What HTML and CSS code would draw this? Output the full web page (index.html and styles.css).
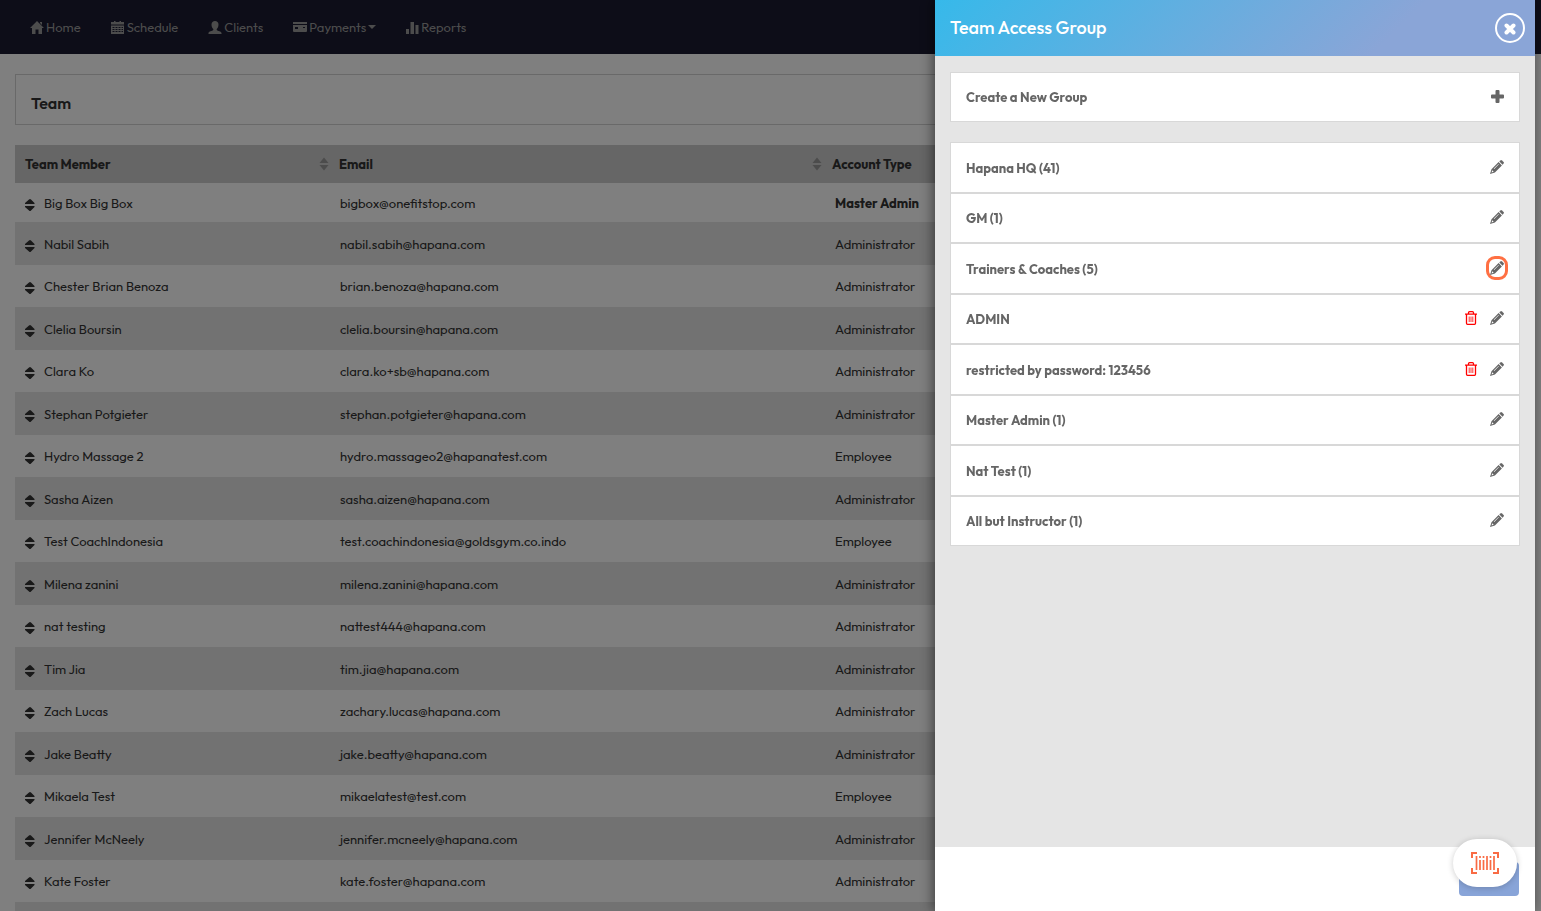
FILE: index.html
```
<!DOCTYPE html>
<html lang="en">
<head>
  <meta charset="utf-8">
  <meta name="viewport" content="width=device-width, initial-scale=1">
  <title>Team</title>
  <link rel="stylesheet" href="styles.css">
</head>

<body>
  <!-- shared icons -->
  <svg class="sprite" aria-hidden="true">
    <symbol id="i-sort" viewBox="0 0 10 14">
      <path d="M5 0.500L9.500 6H0.500zM0.500 8H9.500L5 13.500z"/>
    </symbol>
    <symbol id="i-drag" viewBox="0 0 10 14">
      <path d="M4 1.500Q5 .5 6 1.500L9.500 5V6H0V5zM0 8H9.500V9L6 12.500Q5 13.500 4 12.500L0 9z"/>
    </symbol>
    <symbol id="i-pencil" viewBox="0 0 14 14">
      <path d="M9.300 1.400L10.400 .4q.8-.7 1.600 0L13.600 2q.7.800 0 1.600L12.600 4.700z"/>
      <path fill-rule="evenodd" d="M8.600 2.100L11.900 5.400L4.900 12.500L0 14L1.500 9.200zM2.300 10.300L1.500 12.500L3.700 11.700zM8.500 3.900L3.800 8.600L4.200 9L8.900 4.300z"/>
    </symbol>
    <symbol id="i-trash" viewBox="0 0 12 14">
      <path fill="none" stroke="currentColor" stroke-width="1.300" d="M0 3.200H12M3.500 3V1.700Q3.500.7 4.500.7H7.500Q8.500.7 8.500 1.700V3M1.500 3.200V12.300Q1.500 13.300 2.500 13.300H9.500Q10.500 13.300 10.500 12.300V3.200"/>
      <path fill="none" stroke="currentColor" stroke-width=".8" d="M4.200 5.500V11M6 5.500V11M7.800 5.500V11"/>
    </symbol>
  </svg>

  <nav class="navbar">
    <a href="#"><svg width="14" height="13" viewBox="0 0 14 13"><path d="M7 0L14 7H12V13H8.500V8.500H5.500V13H2V7H0z"/><path d="M10 1H12V4L10 2z"/></svg>Home</a>
    <a href="#"><svg width="14" height="13" viewBox="0 0 14 13"><path fill-rule="evenodd" d="M0 1H3V0H4.500V1H8.500V0H10V1H13V3.500H0zM0 4.500H13V13H0zM1.500 6V7H3.500V6zM4.500 6V7H6.500V6zM7.500 6V7H9.500V6zM10.500 6V7H12V6zM1.500 8V9H3.500V8zM4.500 8V9H6.500V8zM7.500 8V9H9.500V8zM10.500 8V9H12V8zM1.500 10V11H3.500V10zM4.500 10V11H6.500V10zM7.500 10V11H9.500V10zM10.500 10V11H12V10z"/></svg>Schedule</a>
    <a href="#"><svg width="14" height="13" viewBox="0 0 14 13"><path d="M7 0C9 0 10.500 1.300 10.500 3.500C10.500 5.500 9.700 7 8.700 8V9C9.500 10 13.500 10.300 13.500 12V13H.5V12C.5 10.300 4.500 10 5.300 9V8C4.300 7 3.500 5.500 3.500 3.500C3.500 1.300 5 0 7 0z"/></svg>Clients</a>
    <a href="#"><svg width="14" height="13" viewBox="0 0 14 13"><path fill-rule="evenodd" d="M0 1H14V3H0zM0 4H14V10Q14 11 13 11H1Q0 11 0 10zM2 6V8H5V6zM10 6V7H12V6z"/></svg>Payments<span class="caret"></span></a>
    <a href="#"><svg width="13" height="13" viewBox="0 0 13 13"><path d="M0 8H3V13H0zM4.500 1H8V13H4.500zM9.500 4H12.500V13H9.500z"/></svg>Reports</a>
  </nav>

  <main>
    <h1 class="page-title">Team</h1>

    <table class="team">
      <colgroup>
        <col class="col-name">
        <col class="col-email">
        <col>
      </colgroup>
      <thead>
        <tr>
          <th><div>Team Member<svg class="sort"><use href="#i-sort"/></svg></div></th>
          <th><div>Email<svg class="sort"><use href="#i-sort"/></svg></div></th>
          <th>Account Type</th>
        </tr>
      </thead>
      <tbody>
        <tr><td><svg class="drag"><use href="#i-drag"/></svg>Big Box Big Box</td><td>bigbox@onefitstop.com</td><td><b>Master Admin</b></td></tr>
        <tr><td><svg class="drag"><use href="#i-drag"/></svg>Nabil Sabih</td><td>nabil.sabih@hapana.com</td><td>Administrator</td></tr>
        <tr><td><svg class="drag"><use href="#i-drag"/></svg>Chester Brian Benoza</td><td>brian.benoza@hapana.com</td><td>Administrator</td></tr>
        <tr><td><svg class="drag"><use href="#i-drag"/></svg>Clelia Boursin</td><td>clelia.boursin@hapana.com</td><td>Administrator</td></tr>
        <tr><td><svg class="drag"><use href="#i-drag"/></svg>Clara Ko</td><td>clara.ko+sb@hapana.com</td><td>Administrator</td></tr>
        <tr><td><svg class="drag"><use href="#i-drag"/></svg>Stephan Potgieter</td><td>stephan.potgieter@hapana.com</td><td>Administrator</td></tr>
        <tr><td><svg class="drag"><use href="#i-drag"/></svg>Hydro Massage 2</td><td>hydro.massageo2@hapanatest.com</td><td>Employee</td></tr>
        <tr><td><svg class="drag"><use href="#i-drag"/></svg>Sasha Aizen</td><td>sasha.aizen@hapana.com</td><td>Administrator</td></tr>
        <tr><td><svg class="drag"><use href="#i-drag"/></svg>Test CoachIndonesia</td><td>test.coachindonesia@goldsgym.co.indo</td><td>Employee</td></tr>
        <tr><td><svg class="drag"><use href="#i-drag"/></svg>Milena zanini</td><td>milena.zanini@hapana.com</td><td>Administrator</td></tr>
        <tr><td><svg class="drag"><use href="#i-drag"/></svg>nat testing</td><td>nattest444@hapana.com</td><td>Administrator</td></tr>
        <tr><td><svg class="drag"><use href="#i-drag"/></svg>Tim Jia</td><td>tim.jia@hapana.com</td><td>Administrator</td></tr>
        <tr><td><svg class="drag"><use href="#i-drag"/></svg>Zach Lucas</td><td>zachary.lucas@hapana.com</td><td>Administrator</td></tr>
        <tr><td><svg class="drag"><use href="#i-drag"/></svg>Jake Beatty</td><td>jake.beatty@hapana.com</td><td>Administrator</td></tr>
        <tr><td><svg class="drag"><use href="#i-drag"/></svg>Mikaela Test</td><td>mikaelatest@test.com</td><td>Employee</td></tr>
        <tr><td><svg class="drag"><use href="#i-drag"/></svg>Jennifer McNeely</td><td>jennifer.mcneely@hapana.com</td><td>Administrator</td></tr>
        <tr><td><svg class="drag"><use href="#i-drag"/></svg>Kate Foster</td><td>kate.foster@hapana.com</td><td>Administrator</td></tr>
        <tr><td></td><td></td><td></td></tr>
      </tbody>
    </table>
  </main>

  <div class="backdrop"></div>

  <aside class="drawer">
    <header class="drawer-header">
      <h2>Team Access Group</h2>
      <button class="close" aria-label="Close"><svg width="12" height="12" viewBox="0 0 12 12"><path fill="none" stroke="#fff" stroke-width="4" stroke-linecap="round" d="M2.500 2.500L9.500 9.500M9.500 2.500L2.500 9.500"/></svg></button>
    </header>

    <div class="drawer-body">
      <div class="group create">
        <span>Create a New Group</span>
        <button aria-label="Add group"><svg width="13" height="13" viewBox="0 0 13 13"><path d="M4.500 1q0-1 1-1h2q1 0 1 1v3.500H12q1 0 1 1v2q0 1-1 1H8.500V12q0 1-1 1h-2q-1 0-1-1V8.500H1q-1 0-1-1v-2q0-1 1-1h3.500z"/></svg></button>
      </div>

      <ul class="groups">
        <li class="group"><span>Hapana HQ (41)</span><button aria-label="Edit"><svg class="pencil"><use href="#i-pencil"/></svg></button></li>
        <li class="group"><span>GM (1)</span><button aria-label="Edit"><svg class="pencil"><use href="#i-pencil"/></svg></button></li>
        <li class="group"><span>Trainers &amp; Coaches (5)</span><button class="marked" aria-label="Edit"><svg class="pencil"><use href="#i-pencil"/></svg></button></li>
        <li class="group"><span>ADMIN</span><button class="delete" aria-label="Delete"><svg class="trash"><use href="#i-trash"/></svg></button><button aria-label="Edit"><svg class="pencil"><use href="#i-pencil"/></svg></button></li>
        <li class="group"><span>restricted by password: 123456</span><button class="delete" aria-label="Delete"><svg class="trash"><use href="#i-trash"/></svg></button><button aria-label="Edit"><svg class="pencil"><use href="#i-pencil"/></svg></button></li>
        <li class="group"><span>Master Admin (1)</span><button aria-label="Edit"><svg class="pencil"><use href="#i-pencil"/></svg></button></li>
        <li class="group"><span>Nat Test (1)</span><button aria-label="Edit"><svg class="pencil"><use href="#i-pencil"/></svg></button></li>
        <li class="group"><span>All but Instructor (1)</span><button aria-label="Edit"><svg class="pencil"><use href="#i-pencil"/></svg></button></li>
      </ul>
    </div>

    <footer class="drawer-footer">
      <button class="save" aria-label="Save"></button>
    </footer>
  </aside>

  <button class="scan" aria-label="Scan barcode">
    <svg width="28" height="22" viewBox="0 0 28 22">
      <path fill="none" stroke="#f96b44" stroke-width="2" d="M6 1H1V6M22 1H27V6M6 21H1V16M22 21H27V16"/>
      <path fill="none" stroke="#f96b44" stroke-width="1.700" d="M5.500 4V18M9 8V18M12.500 8V18M16 4V18M19.500 8V18M23 4V18M9 4V6M12.500 4V6M19.500 4V6"/>
    </svg>
  </button>
</body>

</html>
```
FILE: styles.css
```
* {
  box-sizing: border-box;
}

body {
  margin: 0;
  height: 100vh;
  overflow: hidden;
  background-color: #fff;
  color: #333;
  font-family: Outfit, Lato, sans-serif;
  font-size: 13px;
  line-height: 20px;
}

button {
  display: flex;
  align-items: center;
  justify-content: center;
  padding: 0;
  border: none;
  background: none;
  color: #666;
  cursor: pointer;
}

svg {
  flex-shrink: 0;
  fill: currentColor;
}

.sprite {
  display: none;
}

/* Top navigation */
.navbar {
  display: flex;
  align-items: center;
  height: 54px;
  padding: 0 15px;
  background-color: #1a1a30;
}

.navbar a {
  display: flex;
  align-items: center;
  gap: 2px;
  padding: 0 15px;
  color: #999;
  text-decoration: none;
}

.caret {
  border-top: 4px solid;
  border-left: 4px solid transparent;
  border-right: 4px solid transparent;
}

main {
  padding: 20px 15px 0;
}

.page-title {
  margin: 0 0 20px;
  padding: 18px 15px 11px;
  border: 1px solid #d2d2d2;
  font-size: 16px;
  font-weight: 600;
  line-height: 20px;
}

/* Team table */
.team {
  width: 100%;
  table-layout: fixed;
  border-collapse: collapse;
}

.col-name {
  width: 314px;
}

.col-email {
  width: 493px;
}

.team th {
  height: 38px;
  padding: 0 0 0 10px;
  background-color: #ccc;
  text-align: left;
}

.team th div {
  display: flex;
  align-items: center;
  justify-content: space-between;
}

.team td {
  height: 42px;
  padding: 0 0 0 11px;
}

.team tr:nth-child(even) td {
  height: 43px;
  background-color: #e5e5e5;
}

.team tr:first-child td {
  height: 39px;
}

.team td:first-child {
  padding-left: 10px;
}

.team td:last-child {
  padding-left: 13px;
}

.sort {
  width: 10px;
  height: 14px;
  color: #999;
}

.drag {
  width: 10px;
  height: 14px;
  margin-right: 9px;
  vertical-align: -4px;
}

.backdrop {
  position: fixed;
  inset: 0;
  background-color: rgba(0, 0, 0, 0.5);
}

/* Slide-in drawer */
.drawer {
  position: fixed;
  top: 0;
  right: 6px;
  bottom: 0;
  display: flex;
  flex-direction: column;
  width: 600px;
  max-width: 100%;
  background-color: #e5e5e5;
  box-shadow: -2px 0 12px rgba(0, 0, 0, 0.5);
}

.drawer-header {
  display: flex;
  align-items: center;
  justify-content: space-between;
  height: 56px;
  padding: 0 10px 0 15px;
  background: linear-gradient(135deg, #36b9ea 0%, #8aa5d7 75%);
  color: #fff;
}

.drawer-header h2 {
  margin: 0;
  font-size: 18px;
  font-weight: 500;
}

.close {
  width: 30px;
  height: 30px;
  padding-top: 2px;
  border: 2px solid #fff;
  border-radius: 50%;
}

.drawer-body {
  flex: 1;
  padding: 16px 15px;
  overflow: auto;
}

.group {
  display: flex;
  align-items: center;
  gap: 13px;
  height: 50px;
  padding: 0 15px;
  border: 1px solid #d8d8d8;
  background-color: #fff;
  color: #666;
  font-weight: bold;
}

.group span {
  flex: 1;
}

.group button {
  margin-bottom: 2px;
}

.groups {
  margin: 20px 0 0;
  padding: 0;
  list-style: none;
}

.groups .group:nth-child(odd) {
  height: 51px;
}

.pencil {
  width: 14px;
  height: 14px;
}

.trash {
  width: 12px;
  height: 14px;
}

.group .delete {
  color: #f00;
}

.group .marked {
  width: 22px;
  height: 24px;
  margin-right: -4px;
  border: 3px solid #ff7043;
  border-radius: 9px;
}

.drawer-footer {
  display: flex;
  justify-content: flex-end;
  padding: 15px 16px;
  background-color: #fff;
}

.save {
  width: 60px;
  height: 34px;
  border-radius: 4px;
  background-color: #88a4d8;
}

.scan {
  position: fixed;
  right: 24px;
  bottom: 24px;
  width: 64px;
  height: 48px;
  border-radius: 24px;
  background-color: #fff;
  box-shadow: 0 1px 6px rgba(0, 0, 0, 0.2);
}
```
